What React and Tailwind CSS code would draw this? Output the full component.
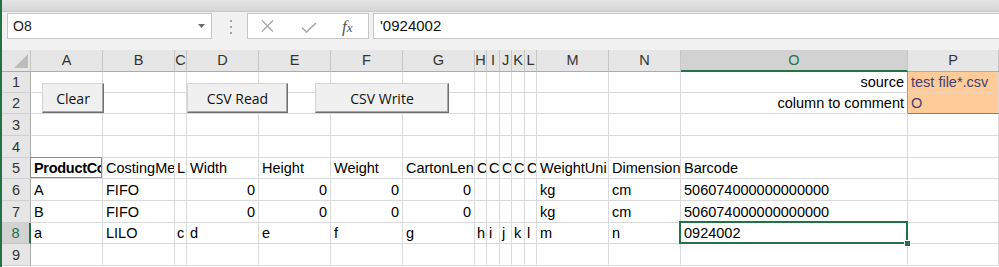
import React from 'react';

const COLS = ['A', 'B', 'C', 'D', 'E', 'F', 'G', 'H', 'I', 'J', 'K', 'L', 'M', 'N', 'O', 'P'];

// cell contents per row, keyed by column letter (text as far as the sheet shows it)
const ROWS = [
    { n: 1, c: { O: { t: 'source', r: true }, P: { t: 'test file*.csv', input: true } } },
    { n: 2, c: { O: { t: 'column to comment', r: true }, P: { t: 'O', input: true, last: true } } },
    { n: 3, c: {} },
    { n: 4, c: {} },
    {
        n: 5,
        c: {
            A: { t: 'ProductCo', b: true, box: true }, B: { t: 'CostingMe' }, C: { t: 'L' },
            D: { t: 'Width' }, E: { t: 'Height' }, F: { t: 'Weight' }, G: { t: 'CartonLen' },
            H: { t: 'C' }, I: { t: 'C' }, J: { t: 'C' }, K: { t: 'C' }, L: { t: 'C' },
            M: { t: 'WeightUni' }, N: { t: 'Dimension' }, O: { t: 'Barcode' },
        },
    },
    {
        n: 6,
        c: {
            A: { t: 'A' }, B: { t: 'FIFO' }, D: { t: '0', r: true }, E: { t: '0', r: true },
            F: { t: '0', r: true }, G: { t: '0', r: true }, M: { t: 'kg' }, N: { t: 'cm' },
            O: { t: '506074000000000000' },
        },
    },
    {
        n: 7,
        c: {
            A: { t: 'B' }, B: { t: 'FIFO' }, D: { t: '0', r: true }, E: { t: '0', r: true },
            F: { t: '0', r: true }, G: { t: '0', r: true }, M: { t: 'kg' }, N: { t: 'cm' },
            O: { t: '506074000000000000' },
        },
    },
    {
        n: 8,
        c: {
            A: { t: 'a' }, B: { t: 'LILO' }, C: { t: 'c' }, D: { t: 'd' }, E: { t: 'e' }, F: { t: 'f' },
            G: { t: 'g' }, H: { t: 'h' }, I: { t: 'i' }, J: { t: 'j' }, K: { t: 'k' }, L: { t: 'l' },
            M: { t: 'm' }, N: { t: 'n' }, O: { t: '0924002', sel: true },
        },
    },
    { n: 9, c: {} },
];

const NARROW = ['C', 'H', 'I', 'J', 'K', 'L'];

const Cell = ({ col, cell }) => {
    let cls = 'relative border-r border-b border-[#dadada]';
    if (cell?.input) {
        cls = 'relative bg-[#ffcc99] border-r border-[#dadada] ' + (cell.last ? 'border-b border-b-[#7f7f7f]' : 'border-b border-b-[#f0d2b4]');
    }
    if (col === 'O' && cell?.r) cls += ' border-r-[#9a9a9a]';
    return (
        <div className={cls}>
            {cell && (
                <div
                    className={
                        'h-full flex items-center overflow-hidden whitespace-nowrap leading-none pt-[1px] ' +
                        (NARROW.includes(col) ? 'pl-[2px] tracking-[-0.5px] ' : 'pl-[3px] pr-[3px] ') +
                        (cell.r ? 'justify-end ' : '') +
                        (cell.b ? 'font-bold tracking-[-0.3px] ' : '') +
                        (cell.input ? 'text-[#3f3f76]' : 'text-black')
                    }
                >
                    {cell.t}
                </div>
            )}
            {cell?.box && <div className="pointer-events-none absolute -top-px -left-px right-0 bottom-0 border border-[#8c8c8c]"></div>}
            {cell?.sel && (
                <>
                    <div className="pointer-events-none absolute -top-[2px] -left-[2px] -right-[1px] -bottom-[1px] border-2 border-[#217346] z-10"></div>
                    <div className="absolute -right-[4px] -bottom-[4px] w-[7px] h-[7px] bg-[#217346] border border-white z-20"></div>
                </>
            )}
        </div>
    );
};

const FormButton = ({ label, className }) => (
    <div
        className={
            'absolute h-[30px] flex items-center justify-center bg-[#f0f0f0] border-t border-l border-[#d4d4d4] border-r border-b border-r-[#6e6e6e] border-b-[#6e6e6e] shadow-[inset_-1px_-1px_0_#a8a8a8] text-[14px] text-[#111] font-["Open_Sans"] z-20 ' +
            className
        }
    >
        {label}
    </div>
);

const App = () => {
    return (
        <div className="w-[999px] h-[267px] overflow-hidden flex bg-white font-['Liberation_Sans',Arial,sans-serif] text-[14.5px]">
            <div className="w-[2px] shrink-0 bg-[#217346]"></div>
            <div className="flex-1 flex flex-col min-w-0">
                {/* ribbon edge */}
                <div className="h-[12px] shrink-0 bg-gradient-to-b from-[#e4e4e4] to-[#d6d6d6] border-b border-[#c8c8c8]"></div>

                {/* formula bar */}
                <div className="h-[38px] shrink-0 bg-[#f1f1f1] flex items-start">
                    <div className="ml-[5px] mt-[1px] w-[205px] h-[26px] bg-white border border-[#c6c6c6] flex items-center pl-[5px] pr-[6px]">
                        <span className="text-[14px] text-[#222] flex-1">O8</span>
                        <svg width="7" height="4" viewBox="0 0 7 4"><path d="M0 0H7L3.5 4Z" fill="#6b6b6b" /></svg>
                    </div>
                    <div className="ml-[18px] mt-[8px] flex flex-col gap-[4px]">
                        <div className="w-[2px] h-[2px] bg-[#a3a3a3]"></div>
                        <div className="w-[2px] h-[2px] bg-[#a3a3a3]"></div>
                        <div className="w-[2px] h-[2px] bg-[#a3a3a3]"></div>
                    </div>
                    <div className="ml-[15px] mt-[1px] w-[122px] h-[26px] bg-white border border-[#c6c6c6] flex items-center">
                        <svg className="ml-[13px]" width="13" height="12" viewBox="0 0 13 12">
                            <path d="M1 0.5L12 11.5M12 0.5L1 11.5" stroke="#a8a8a8" strokeWidth="1.4" />
                        </svg>
                        <svg className="ml-[27px] mt-[2px]" width="16" height="11" viewBox="0 0 16 11">
                            <path d="M1 5.5L5.5 10L15 1" stroke="#a8a8a8" strokeWidth="1.6" fill="none" />
                        </svg>
                        <span className="ml-[25px] font-['Liberation_Serif',serif] italic text-[#555] text-[17px] leading-none">
                            f<span className="text-[13px]">x</span>
                        </span>
                    </div>
                    <div className="ml-[4px] mt-[1px] flex-1 h-[26px] bg-white border border-r-0 border-[#c6c6c6] flex items-center pl-[6px]">
                        <span className="text-[15px] text-[#111]">'0924002</span>
                    </div>
                </div>

                {/* sheet */}
                <div className="relative shrink-0">
                    <div className="grid grid-cols-[29px_72px_72px_12px_72px_72px_72px_72px_12px_13px_12px_13px_12px_72px_72px_227px_91px] grid-rows-[22px_21px_21px_22px_22px_21px_22px_22px_21px_22px]">
                        {/* column headers */}
                        <div className="relative bg-[#e6e6e6] border-r border-b border-r-[#c6c6c6] border-b-[#ababab]">
                            <svg className="absolute right-[2px] bottom-[3px]" width="14" height="14" viewBox="0 0 14 14">
                                <path d="M14 0V14H0Z" fill="#bcbcbc" />
                            </svg>
                        </div>
                        {COLS.map((c) =>
                            c === 'O' ? (
                                <div key={c} className="bg-[#d2d2d2] border-r border-r-[#c6c6c6] border-b-2 border-b-[#217346] flex items-center justify-center text-[#217346] pt-[1px]">
                                    {c}
                                </div>
                            ) : (
                                <div key={c} className="bg-[#e6e6e6] border-r border-b border-r-[#c6c6c6] border-b-[#ababab] flex items-center justify-center text-[#333] overflow-hidden">
                                    {c}
                                </div>
                            )
                        )}

                        {ROWS.map((row) => (
                            <React.Fragment key={row.n}>
                                {row.n === 8 ? (
                                    <div className="bg-[#d2d2d2] border-b border-b-[#c6c6c6] border-r-2 border-r-[#217346] flex items-center justify-center text-[#217346] pt-[2px]">
                                        {row.n}
                                    </div>
                                ) : (
                                    <div className="bg-[#e6e6e6] border-b border-r border-b-[#d0d0d0] border-r-[#ababab] flex items-center justify-center text-[#333] pt-[2px]">
                                        {row.n}
                                    </div>
                                )}
                                {COLS.map((c) => (
                                    <Cell key={c} col={c} cell={row.c[c]} />
                                ))}
                            </React.Fragment>
                        ))}
                    </div>

                    {/* form control buttons over the grid */}
                    <FormButton label="Clear" className="left-[40px] top-[33px] w-[62px]" />
                    <FormButton label="CSV Read" className="left-[185px] top-[33px] w-[101px]" />
                    <FormButton label="CSV Write" className="left-[313px] top-[33px] w-[134px]" />
                </div>
            </div>
        </div>
    );
};

export default App;
